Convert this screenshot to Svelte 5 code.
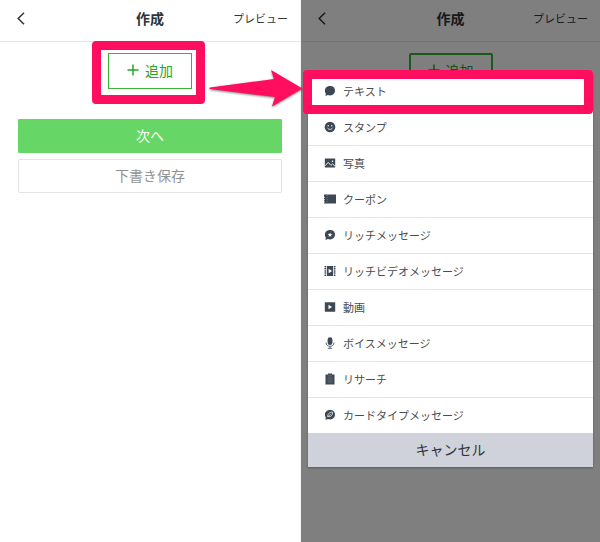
<script>
	const types = [
		{ icon: 'text', label: 'テキスト' },
		{ icon: 'stamp', label: 'スタンプ' },
		{ icon: 'photo', label: '写真' },
		{ icon: 'coupon', label: 'クーポン' },
		{ icon: 'rich', label: 'リッチメッセージ' },
		{ icon: 'richvideo', label: 'リッチビデオメッセージ' },
		{ icon: 'video', label: '動画' },
		{ icon: 'voice', label: 'ボイスメッセージ' },
		{ icon: 'research', label: 'リサーチ' },
		{ icon: 'card', label: 'カードタイプメッセージ' }
	];
</script>

{#snippet header()}
	<header class="header">
		<button class="back" aria-label="戻る">
			<svg width="8" height="13" viewBox="0 0 8 13">
				<path d="M7 0.8 L1.2 6.5 L7 12.2" fill="none" stroke="currentColor" stroke-width="1.5" />
			</svg>
		</button>
		<h1 class="title">作成</h1>
		<button class="preview">プレビュー</button>
	</header>
{/snippet}

{#snippet addLabel()}
	<svg width="12" height="12" viewBox="0 0 12 12">
		<path d="M6 0.5 V11.5 M0.5 6 H11.5" stroke="currentColor" stroke-width="1.5" />
	</svg>
	追加
{/snippet}

{#snippet bubble()}
	<path d="M6.2 1 C9.3 1 11 3 11 5.6 C11 8.6 8.9 10.4 6.2 10.4 C5.2 10.4 4.6 10.3 3.9 10 L1.5 11 L1.8 8.6 C1.1 7.8 0.9 6.8 0.9 5.7 C0.9 3 3 1 6.2 1 Z" />
{/snippet}

{#snippet typeIcon(name)}
	<svg class="icon" width="12" height="12" viewBox="0 0 12 12" fill="currentColor" aria-hidden="true">
		{#if name === 'text'}
			{@render bubble()}
		{:else if name === 'stamp'}
			<circle cx="6" cy="6" r="5.3" />
			<circle cx="4.2" cy="4.8" r="0.7" fill="#fff" />
			<circle cx="7.8" cy="4.8" r="0.7" fill="#fff" />
			<path d="M3.6 6.8 C4.2 9 7.8 9 8.4 6.8" fill="none" stroke="#fff" stroke-width="0.8" />
		{:else if name === 'photo'}
			<rect x="0.8" y="1.5" width="10.4" height="9" rx="0.5" />
			<path d="M1 8.8 L4.2 5.4 L7 8.4 L8.6 6.9 L11 9.2" fill="none" stroke="#fff" stroke-width="0.9" />
			<circle cx="8.5" cy="4.2" r="0.8" fill="#fff" />
		{:else if name === 'coupon'}
			<path d="M0 1.6 H12 V10.4 H0 V9.4 H0.6 V8.2 H0 V7.2 H0.6 V6 H0 V5 H0.6 V3.8 H0 Z" />
			<path d="M3.2 2 V10" stroke="#8b939b" stroke-width="0.6" stroke-dasharray="1 1" />
		{:else if name === 'rich'}
			{@render bubble()}
			<path d="M6 3.4 L6.6 5 L8.3 5.1 L7 6.2 L7.4 7.8 L6 6.9 L4.6 7.8 L5 6.2 L3.7 5.1 L5.4 5 Z" fill="#fff" />
		{:else if name === 'richvideo'}
			<rect x="3" y="1" width="6" height="10" />
			<path d="M1.4 1 V11 M10.6 1 V11" stroke="currentColor" stroke-width="1.7" stroke-dasharray="1.5 0.6" />
			<path d="M4.6 3.7 L8.2 6 L4.6 8.3 Z" fill="#fff" />
		{:else if name === 'video'}
			<rect x="0.8" y="1.3" width="10.4" height="9.4" rx="0.5" />
			<path d="M4.5 3.8 L8 6 L4.5 8.2 Z" fill="#fff" />
		{:else if name === 'voice'}
			<rect x="3.6" y="0.3" width="4.8" height="7.8" rx="2.4" />
			<path d="M2 5.5 C2 10.6 10 10.6 10 5.5 M6 9.2 V11.4 M4 11.4 H8" fill="none" stroke="currentColor" stroke-width="0.8" />
		{:else if name === 'research'}
			<path d="M1.5 1.6 H4 V0.6 H8 V1.6 H10.5 V11.5 H1.5 Z" />
			<path d="M4 2.8 H8 M3.5 5 H8.5 M3.5 7 H8.5 M3.5 9 H8.5" stroke="#8b939b" stroke-width="0.5" />
		{:else if name === 'card'}
			{@render bubble()}
			<path d="M3.8 8 C3.3 5 5.3 3.2 8.6 3.1 C8.7 6 7.2 8 4.8 7.6 M3.8 8 L7 4.8" fill="none" stroke="#fff" stroke-width="0.7" />
		{/if}
	</svg>
{/snippet}

<main class="screens">
	<section class="screen">
		{@render header()}
		<div class="content">
			<div class="add-wrap">
				<button class="add">{@render addLabel()}</button>
				<div class="highlight highlight-add"></div>
			</div>
			<div class="actions">
				<button class="action next">次へ</button>
				<button class="action draft">下書き保存</button>
			</div>
		</div>
	</section>

	<section class="screen screen-menu">
		{@render header()}
		<div class="content">
			<button class="add add-active">{@render addLabel()}</button>
		</div>
		<div class="overlay">
			<div class="sheet">
				<ul class="types">
					{#each types as type}
						<li>
							<button class="type">
								{@render typeIcon(type.icon)}
								{type.label}
							</button>
						</li>
					{/each}
				</ul>
				<button class="cancel">キャンセル</button>
				<div class="highlight highlight-type"></div>
			</div>
		</div>
	</section>

	<svg class="arrow" width="96" height="42" viewBox="0 0 96 42">
		<path d="M2 21 Q1 20 2 19.5 L66 11 L63 2 L94.5 20.5 L64 38.5 L67 29 Z" />
	</svg>
</main>

<style>
	:global(body) {
		margin: 0;
	}

	.screens {
		position: relative;
		display: grid;
		grid-template-columns: 1fr 1fr;
		min-height: 100vh;
		background-color: #fff;
		font-family: "Noto Sans CJK JP", sans-serif;
		color: #2f3437;
	}

	button {
		margin: 0;
		padding: 0;
		border: 0;
		background: none;
		color: inherit;
		font: inherit;
		cursor: pointer;
	}

	.screen {
		position: relative;
	}

	.screen-menu {
		border-left: 1px solid #f4f4f4;
	}

	.header {
		display: grid;
		grid-template-columns: 1fr auto 1fr;
		align-items: center;
		box-sizing: border-box;
		height: 42px;
		padding: 0 12px 5px;
		border-bottom: 1px solid #e4e6e8;
	}

	.back {
		display: flex;
		justify-self: start;
		padding: 0 5px;
	}

	.title {
		margin: 0;
		font-size: 14px;
		line-height: 20px;
		font-weight: 700;
	}

	.preview {
		justify-self: end;
		font-size: 11px;
		line-height: 20px;
	}

	.content {
		display: flex;
		flex-direction: column;
		align-items: center;
		padding: 11px 18px 0;
	}

	.add-wrap {
		position: relative;
	}

	.add {
		display: flex;
		justify-content: center;
		align-items: center;
		gap: 6px;
		box-sizing: border-box;
		width: 84px;
		height: 36px;
		padding-bottom: 2px;
		border: 1px solid #3bb03b;
		font-size: 14px;
		line-height: 20px;
		color: #27a52b;
	}

	.add-active {
		border-width: 2px;
		border-radius: 2px;
	}

	.actions {
		display: flex;
		flex-direction: column;
		gap: 6px;
		align-self: stretch;
		margin-top: 30px;
	}

	.action {
		box-sizing: border-box;
		height: 34px;
		padding-bottom: 2px;
		border-radius: 1px;
		font-size: 14px;
		line-height: 20px;
	}

	.next {
		background-color: #66d766;
		color: #fff;
	}

	.draft {
		border: 1px solid #e4e4e4;
		color: #929292;
	}

	.overlay {
		position: absolute;
		inset: 0;
		padding: 74px 7px 0;
		background-color: rgba(0, 0, 0, 0.5);
	}

	.sheet {
		position: relative;
		background-color: #fff;
		box-shadow: 0 1px 2px rgba(0, 0, 0, 0.3);
	}

	.types {
		margin: 0;
		padding: 0;
		list-style: none;
	}

	.types li {
		border-bottom: 1px solid #e4e5e6;
	}

	.types li:last-child {
		border-bottom: 0;
	}

	.type {
		display: flex;
		align-items: center;
		gap: 7px;
		width: 100%;
		height: 35px;
		padding: 0 0 2px 16px;
		font-size: 11px;
		line-height: 20px;
		color: #484c50;
	}

	.icon {
		flex: none;
		color: #3d4853;
	}

	.cancel {
		display: block;
		width: 100%;
		height: 34px;
		padding-bottom: 2px;
		background-color: #cfd2db;
		font-size: 14px;
		line-height: 20px;
	}

	.highlight {
		position: absolute;
		border: 9px solid #ff0d5e;
		border-radius: 4px;
		pointer-events: none;
	}

	.highlight-add {
		inset: -12px -13px -15px -16px;
	}

	.highlight-type {
		top: -4px;
		left: -5px;
		right: 0;
		height: 26px;
	}

	.arrow {
		position: absolute;
		top: 68px;
		left: calc(50% - 92px);
		fill: #ff0d5e;
		filter: drop-shadow(0 1px 1px rgba(0, 0, 0, 0.5));
		pointer-events: none;
	}
</style>
